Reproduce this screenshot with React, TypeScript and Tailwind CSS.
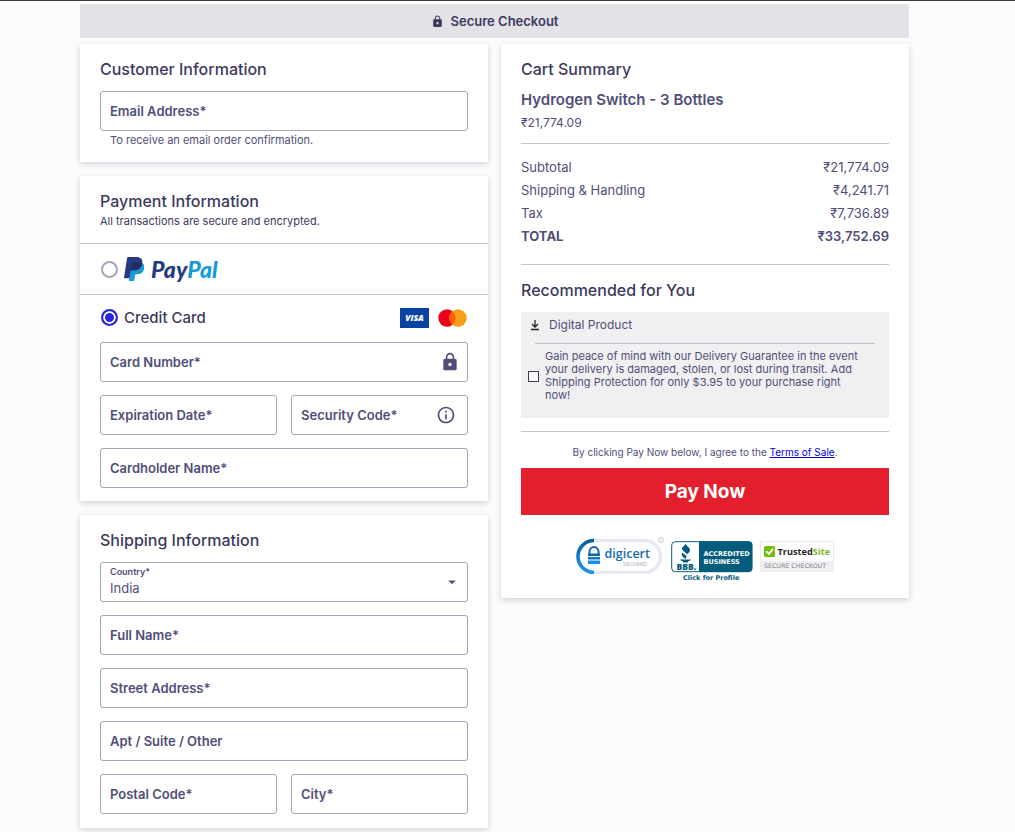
import type { ReactNode } from "react";
import { MdArrowDropDown, MdInfoOutline, MdLock } from "react-icons/md";

const titleClass = "text-base leading-6 font-medium text-[#3c3a5c]";
const radioClass =
  "ml-px size-[17px] appearance-none rounded-full border-2 border-[#a5a3b5] checked:border-[#2a25e0] checked:bg-[#2a25e0] checked:shadow-[inset_0_0_0_2px_white]";

function Card({ children }: { children: ReactNode }) {
  return <section className="bg-white pt-[13px] shadow-[0_2px_6px_rgba(60,58,92,0.22)]">{children}</section>;
}

function Field({ label, type = "text", icon }: { label: string; type?: string; icon?: ReactNode }) {
  return (
    <label className="flex h-10 w-full min-w-0 items-center gap-2 rounded-[3px] border border-[#a5a3b5] px-[9px]">
      <span className="text-[13px] leading-5 font-semibold whitespace-nowrap text-[#504e78]">{label}</span>
      <input type={type} className="h-full w-0 min-w-0 flex-1 bg-transparent text-[13px] outline-none" />
      {icon}
    </label>
  );
}

function PayPalLogo() {
  return (
    <span className="flex items-center gap-[7px]">
      <svg width="20" height="24" viewBox="0 0 25.2 30.2" aria-hidden="true">
        <path fill="#253B80" d="M7.266,29.154l0.523-3.322l-1.165-0.027H1.061L4.927,1.292C4.939,1.218,4.978,1.149,5.035,1.1c0.057-0.049,0.13-0.076,0.206-0.076h9.38c3.114,0,5.263,0.648,6.385,1.927c0.526,0.6,0.861,1.227,1.023,1.917c0.17,0.724,0.173,1.589,0.007,2.644l-0.012,0.077v0.676l0.526,0.298c0.443,0.235,0.795,0.504,1.065,0.812c0.45,0.513,0.741,1.165,0.864,1.938c0.127,0.795,0.085,1.741-0.123,2.812c-0.24,1.232-0.628,2.305-1.152,3.183c-0.482,0.809-1.096,1.48-1.825,2c-0.696,0.494-1.523,0.869-2.458,1.109c-0.906,0.236-1.939,0.355-3.072,0.355h-0.73c-0.522,0-1.029,0.188-1.427,0.525c-0.399,0.344-0.663,0.814-0.744,1.328l-0.055,0.299l-0.924,5.855l-0.042,0.215c-0.011,0.068-0.03,0.102-0.058,0.125c-0.025,0.021-0.061,0.035-0.096,0.035H7.266z" />
        <path fill="#179BD7" d="M23.048,7.667c-0.028,0.179-0.06,0.362-0.096,0.55c-1.237,6.351-5.469,8.545-10.874,8.545H9.326c-0.661,0-1.218,0.48-1.321,1.132L6.596,26.83l-0.399,2.533c-0.067,0.428,0.263,0.814,0.695,0.814h4.881c0.578,0,1.069-0.42,1.16-0.99l0.048-0.248l0.919-5.832l0.059-0.32c0.09-0.572,0.582-0.992,1.16-0.992h0.73c4.729,0,8.431-1.92,9.513-7.476c0.452-2.321,0.218-4.259-0.978-5.622C24.022,8.286,23.573,7.945,23.048,7.667z" />
        <path fill="#222D65" d="M21.754,7.151c-0.189-0.055-0.384-0.105-0.584-0.15c-0.201-0.044-0.407-0.083-0.619-0.117c-0.742-0.12-1.555-0.177-2.426-0.177h-7.352c-0.181,0-0.353,0.041-0.507,0.115C9.927,6.985,9.675,7.306,9.614,7.699L8.05,17.605l-0.045,0.289c0.103-0.652,0.66-1.132,1.321-1.132h2.752c5.405,0,9.637-2.195,10.874-8.545c0.037-0.188,0.068-0.371,0.096-0.55c-0.313-0.166-0.652-0.308-1.017-0.429C21.941,7.208,21.848,7.179,21.754,7.151z" />
        <path fill="#253B80" d="M9.614,7.699c0.061-0.393,0.313-0.714,0.659-0.879c0.155-0.074,0.326-0.115,0.507-0.115h7.352c0.871,0,1.684,0.057,2.426,0.177c0.212,0.034,0.418,0.073,0.619,0.117c0.2,0.045,0.395,0.095,0.584,0.15c0.094,0.028,0.187,0.057,0.278,0.086c0.365,0.121,0.704,0.264,1.017,0.429c0.368-2.347-0.003-3.945-1.272-5.392C20.378,0.682,17.853,0,14.622,0h-9.38c-0.66,0-1.223,0.48-1.325,1.133L0.01,25.898c-0.077,0.49,0.301,0.932,0.795,0.932h5.791l1.454-9.225L9.614,7.699z" />
      </svg>
      <span className="font-['Lato',sans-serif] text-[23px] leading-6 font-black text-[#253b80] italic">
        Pay<span className="text-[#179bd7]">Pal</span>
      </span>
    </span>
  );
}

function VisaLogo() {
  return (
    <svg width="29" height="20" viewBox="0 0 29 20" role="img" aria-label="Visa">
      <rect width="29" height="20" fill="#0a42a4" />
      <text x="14.5" y="13" textAnchor="middle" fontFamily="'Open Sans', sans-serif" fontSize="8.5" fontWeight="800" fontStyle="italic" fill="#fff">
        VISA
      </text>
    </svg>
  );
}

function MastercardLogo() {
  return (
    <svg width="29" height="18" viewBox="0 0 29 18" role="img" aria-label="Mastercard">
      <circle cx="9" cy="9" r="8.7" fill="#eb001b" />
      <circle cx="20" cy="9" r="8.7" fill="#f79e1b" />
      <path d="M14.5 2.26a8.7 8.7 0 0 1 0 13.48a8.7 8.7 0 0 1 0-13.48z" fill="#ff5f00" />
    </svg>
  );
}

function DigicertBadge() {
  return (
    <svg width="88" height="37" viewBox="0 0 88 37" role="img" aria-label="DigiCert Secured">
      <defs>
        <linearGradient id="digicert-arc" x1="0" y1="0" x2="0" y2="1">
          <stop offset="0" stopColor="#0560a8" />
          <stop offset="1" stopColor="#1a95f0" />
        </linearGradient>
      </defs>
      <rect x="2" y="3.5" width="82.500" height="32" rx="16" fill="#fff" stroke="#e6eaf0" strokeWidth="3.5" />
      <path d="M18 3.5 A16 16 0 0 0 18 35.500" fill="none" stroke="url(#digicert-arc)" strokeWidth="3.6" />
      <path d="M13.500 17v-2.500a4.500 4.500 0 0 1 9 0V17" fill="none" stroke="#0f63ac" strokeWidth="1.900" />
      <path d="M12 16.500h12v2.500h-12z" fill="#0b66b3" />
      <path d="M12 20h12v2.500h-12z" fill="#1277cb" />
      <path d="M12 23.500h12v3.500h-12z" fill="#1c8be8" />
      <text x="28.500" y="20.500" fontFamily="'Open Sans', sans-serif" fontSize="12.500" fontWeight="600" fill="#1469b2">digicert</text>
      <text x="47" y="28.500" fontFamily="'DejaVu Sans', sans-serif" fontSize="5" fill="#a3a9b6">SECURED</text>
      <circle cx="85" cy="3" r="2.600" fill="none" stroke="#b9bdc6" strokeWidth="0.700" />
      <path d="M85 1.500v.6M85 2.600v2" stroke="#b9bdc6" strokeWidth="0.800" />
    </svg>
  );
}

function BbbBadge() {
  return (
    <svg width="82" height="42" viewBox="0 0 82 42" role="img" aria-label="BBB Accredited Business">
      <rect x="0.700" y="0.700" width="80" height="30" rx="3.500" fill="#fff" stroke="#0a5c7c" strokeWidth="1" />
      <path d="M28 .3h49.500a4 4 0 0 1 4 4V27a4 4 0 0 1-4 4H28z" fill="#045c7c" />
      <path d="M14.500 2.500c1 2.500 4.500 4 4.500 6.500c0 2-1.500 3-3.500 4.500c.5-2-4.500-3.500-4.500-6c0-2 3-2.500 3.500-5z" fill="#045c7c" />
      <path d="M11.500 11.500c.5 1.500 4 2.500 4 4.200c0 1-.8 1.800-1.800 2.300c0-1.500-3-2.300-3-4.200c0-1 .3-1.800.8-2.300z" fill="#045c7c" />
      <path d="M9 18.500h11l-1.500 1.500h-1l-.8 1.600H12.300L11.500 20h-1z" fill="#045c7c" />
      <text x="5.500" y="28.800" fontFamily="'Open Sans', sans-serif" fontSize="8.500" fontWeight="800" fill="#045c7c">BBB.</text>
      <text x="32.500" y="14.500" fontFamily="'DejaVu Sans', sans-serif" fontSize="6.500" fontWeight="700" fill="#fff">ACCREDITED</text>
      <text x="32.500" y="23" fontFamily="'DejaVu Sans', sans-serif" fontSize="6.500" fontWeight="700" fill="#fff">BUSINESS</text>
      <text x="12" y="39" fontFamily="'DejaVu Sans', sans-serif" fontSize="6.500" fontWeight="700" fill="#045c7c">Click for Profile</text>
    </svg>
  );
}

function TrustedSiteBadge() {
  return (
    <svg width="74" height="31" viewBox="0 0 74 31" role="img" aria-label="TrustedSite Secure Checkout">
      <rect x="0.500" y="0.500" width="73" height="30" fill="#fff" stroke="#ebebed" />
      <rect x="1" y="20" width="72" height="10" fill="#f0f0f2" />
      <rect x="4" y="5" width="11" height="11" rx="1.500" fill="#76c00d" />
      <path d="M6.300 10.300l2.600 2.600l4.200-5" fill="none" stroke="#fff" strokeWidth="1.900" />
      <text x="17.500" y="14" fontFamily="'Open Sans', sans-serif" fontSize="9.200" fontWeight="700" fill="#26262a">
        Trusted<tspan fill="#76b81c">Site</tspan>
      </text>
      <text x="4" y="27.300" fontFamily="'DejaVu Sans', sans-serif" fontSize="6.300" fill="#82828e">SECURE CHECKOUT</text>
    </svg>
  );
}

const totals = [
  ["Subtotal", "₹21,774.09"],
  ["Shipping & Handling", "₹4,241.71"],
  ["Tax", "₹7,736.89"],
];

export default function App() {
  return (
    <div className="min-h-screen border-t border-[#403c3c] bg-[#fcfcfd] pt-[3px] pr-[106px] pb-1 pl-20 font-['Inter','Noto_Sans',sans-serif] text-[#504e78]">
      <header className="flex h-[34px] items-center justify-center gap-[7px] bg-[#e3e2e7] text-[13px] leading-5 font-semibold text-[#3c3a5c]">
        <MdLock size={13} aria-hidden="true" />
        <h1>Secure Checkout</h1>
      </header>

      <main className="mt-1.5 grid grid-cols-2 items-start gap-[13px]">
        <form className="flex min-w-0 flex-col gap-[14px]">
          <Card>
            <div className="px-5 pb-[14px]">
              <h2 className={titleClass}>Customer Information</h2>
              <div className="mt-2.5">
                <Field label="Email Address*" type="email" />
              </div>
              <p className="mt-px px-2.5 text-[11px] leading-4">To receive an email order confirmation.</p>
            </div>
          </Card>

          <Card>
            <div className="px-5 pb-[14px]">
              <h2 className={titleClass}>Payment Information</h2>
              <p className="text-[11px] leading-4 text-[#3c3a5c]">All transactions are secure and encrypted.</p>
            </div>
            <div className="flex h-[51px] items-center border-t border-[#c4c3d0] px-5">
              <label className="flex items-center gap-1.5">
                <input type="radio" name="method" aria-label="PayPal" className={radioClass} />
                <PayPalLogo />
              </label>
            </div>
            <div className="border-t border-[#c4c3d0] px-5 pb-[13px]">
              <div className="mb-0.5 flex h-[45px] items-center justify-between">
                <label className="flex items-center gap-1.5 text-[15px] leading-5 font-medium text-[#3c3a5c]">
                  <input type="radio" name="method" defaultChecked className={radioClass} />
                  Credit Card
                </label>
                <span className="mr-px flex items-center gap-[9px]">
                  <VisaLogo />
                  <MastercardLogo />
                </span>
              </div>
              <div className="flex flex-col gap-[13px]">
                <Field label="Card Number*" icon={<MdLock size={20} className="-mr-0.5 shrink-0" aria-hidden="true" />} />
                <div className="flex gap-[14px]">
                  <Field label="Expiration Date*" />
                  <Field label="Security Code*" icon={<MdInfoOutline size={20} className="mr-0.5 shrink-0" aria-hidden="true" />} />
                </div>
                <Field label="Cardholder Name*" />
              </div>
            </div>
          </Card>

          <Card>
            <div className="px-5 pb-[14px]">
              <h2 className={titleClass}>Shipping Information</h2>
              <div className="mt-2.5 flex flex-col gap-[13px]">
                <div className="flex h-10 items-center rounded-[3px] border border-[#a5a3b5] pr-1.5 pl-[9px]">
                  <div className="flex min-w-0 flex-1 flex-col">
                    <label htmlFor="country" className="text-[9px] leading-3 font-semibold">
                      Country*
                    </label>
                    <select id="country" className="w-full appearance-none bg-transparent text-[13px] leading-5 outline-none">
                      <option>India</option>
                    </select>
                  </div>
                  <MdArrowDropDown size={18} className="shrink-0" aria-hidden="true" />
                </div>
                <Field label="Full Name*" />
                <Field label="Street Address*" />
                <Field label="Apt / Suite / Other" />
                <div className="flex gap-[14px]">
                  <Field label="Postal Code*" />
                  <Field label="City*" />
                </div>
              </div>
            </div>
          </Card>
        </form>

        <Card>
          <div className="px-5 pb-[15px]">
            <h2 className={titleClass}>Cart Summary</h2>
            <h3 className="mt-[7px] text-[15px] leading-6 font-semibold">Hydrogen Switch - 3 Bottles</h3>
            <p className="mt-px text-xs leading-5">₹21,774.09</p>

            <table className="mt-2.5 w-full border-y border-[#c4c3d0] text-[13px] leading-[23px]">
              <tbody className="before:block before:h-3 after:block after:h-4">
                {totals.map(([name, amount]) => (
                  <tr key={name}>
                    <th scope="row" className="text-left font-normal">{name}</th>
                    <td className="text-right">{amount}</td>
                  </tr>
                ))}
                <tr className="font-semibold">
                  <th scope="row" className="text-left">TOTAL</th>
                  <td className="text-right">₹33,752.69</td>
                </tr>
              </tbody>
            </table>

            <h2 className="mt-[13px] text-base leading-6 font-medium text-[#3c3a5c]">Recommended for You</h2>
            <div className="mt-2.5 bg-[#f0f0f2] pb-4">
              <div className="flex items-center gap-2 px-2 pt-[3px] text-xs leading-5">
                <svg width="12" height="12" viewBox="0 0 12 12" fill="none" stroke="#222" strokeWidth="1.300" aria-hidden="true">
                  <path d="M6 1v7M3 5l3 3l3-3M2 10.500h8" />
                </svg>
                Digital Product
              </div>
              <hr className="mx-[14px] mt-2 border-[#c4c4ca]" />
              <label className="flex items-center gap-1.5 pt-1.5 pr-6 pl-[7px] text-[11px] leading-[13px]">
                <input type="checkbox" className="size-[11px] shrink-0 appearance-none border border-[#3c3a5c] bg-white checked:bg-[#3c3a5c]" />
                Gain peace of mind with our Delivery Guarantee in the event your delivery is damaged, stolen, or lost during transit. Add Shipping Protection for only $3.95 to your purchase right now!
              </label>
            </div>

            <hr className="mt-[13px] border-[#c4c3d0]" />
            <p className="mt-3 text-center text-[10px] leading-4">
              By clicking Pay Now below, I agree to the{" "}
              <a href="#terms" className="text-[#0000ee] underline">Terms of Sale</a>.
            </p>
            <button type="button" className="mt-2 h-[47px] w-full bg-[#e41f2d] text-[19px] leading-6 font-bold text-white">
              Pay Now
            </button>
            <div className="mt-[22px] flex items-start justify-center gap-[7px]">
              <DigicertBadge />
              <div className="pt-1"><BbbBadge /></div>
              <div className="pt-1"><TrustedSiteBadge /></div>
            </div>
          </div>
        </Card>
      </main>
    </div>
  );
}
